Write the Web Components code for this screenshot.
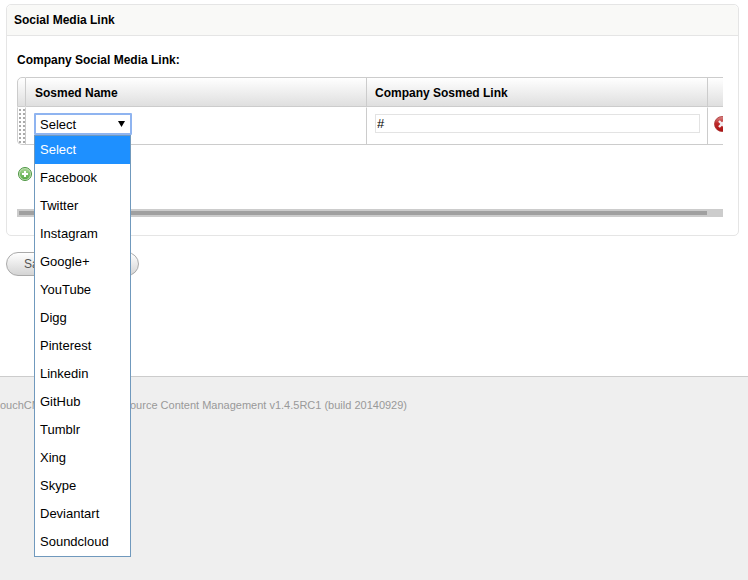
<!DOCTYPE html>
<html lang="en">
<head>
<meta charset="utf-8">
<title>Social Media Link</title>
<style>
  html {
    height: 100%;
  }

  body {
    min-height: 100%;
    margin: 0;
    display: flex;
    flex-direction: column;
    overflow-x: hidden;
    background: #fff;
    color: #000;
    font: 12px/16px "Liberation Sans", Arial, sans-serif;
  }

  main {
    box-sizing: border-box;
    min-height: 376px;
    padding: 4px 9px 0 6px;
  }
</style>
</head>
<body>
<main>
  <cms-panel heading="Social Media Link">
    <sosmed-table label="Company Social Media Link:"></sosmed-table>
  </cms-panel>
  <cms-button>Sa</cms-button>
</main>
<cms-footer>
  <span slot="product">ouchCM</span>
  ource Content Management v1.4.5RC1 (build 20140929)
</cms-footer>

<script>
class CmsPanel extends HTMLElement {
  constructor() {
    super();
    this.attachShadow({ mode: 'open' });

    this.shadowRoot.innerHTML = `
      <style>
        :host {
          display: block;
          border: 1px solid #e5e5e5;
          border-radius: 5px;
        }

        h2 {
          margin: 0;
          padding: 7px;
          border-bottom: 1px solid #e5e5e5;
          border-radius: 5px 5px 0 0;
          background: #f9f9f7;
          font-size: 12px;
          line-height: 16px;
        }

        .body {
          padding: 16px 15px 18px 10px;
        }
      </style>
      <h2></h2>
      <div class="body"><slot></slot></div>
    `;
  }

  connectedCallback() {
    this.shadowRoot.querySelector('h2').textContent = this.getAttribute('heading');
  }
}

class SosmedSelect extends HTMLElement {
  constructor() {
    super();
    this.attachShadow({ mode: 'open' });

    this.shadowRoot.innerHTML = `
      <style>
        :host {
          display: block;
          position: relative;
          width: 98px;
          font-size: 13px;
        }

        select {
          appearance: none;
          display: block;
          box-sizing: border-box;
          width: 100%;
          height: 22px;
          margin: 0;
          padding: 1px 4px 0;
          border: 2px solid #8fb4f0;
          border-radius: 1px;
          outline: none;
          background: #fff;
          color: #000;
          font: inherit;
        }

        svg {
          position: absolute;
          top: 8px;
          right: 7px;
          pointer-events: none;
        }

        ul {
          position: absolute;
          z-index: 10;
          top: 22px;
          left: 0;
          right: 1px;
          margin: 0;
          padding: 0;
          border: 1px solid #7099bd;
          background: #fff;
          list-style: none;
        }

        ul[hidden] {
          display: none;
        }

        li {
          padding: 0 5px;
          line-height: 28px;
          cursor: default;
        }

        li[aria-selected="true"] {
          background: #1e90ff;
          color: #fff;
        }
      </style>
      <select aria-label="Sosmed Name"></select>
      <svg width="7" height="6" viewBox="0 0 7 6" aria-hidden="true">
        <path d="M0 0h7L3.500 6z"/>
      </svg>
      <ul role="listbox" aria-label="Sosmed Name"></ul>
    `;

    this._select = this.shadowRoot.querySelector('select');
    this._list = this.shadowRoot.querySelector('ul');
  }

  set options(names) {
    this._select.replaceChildren(...names.map((name) => new Option(name)));
    this._list.replaceChildren(...names.map((name) => {
      const item = document.createElement('li');
      item.setAttribute('role', 'option');
      item.textContent = name;
      return item;
    }));
    this.mark();
  }

  mark() {
    [...this._list.children].forEach((item, i) => {
      item.setAttribute('aria-selected', String(i === this._select.selectedIndex));
    });
  }

  connectedCallback() {
    this._select.addEventListener('mousedown', (e) => {
      e.preventDefault();
      this._list.hidden = !this._list.hidden;
    });
    this._select.addEventListener('change', () => this.mark());
    this._list.addEventListener('click', (e) => {
      this._select.selectedIndex = [...this._list.children].indexOf(e.target);
      this.mark();
      this._list.hidden = true;
    });
  }
}

class SosmedTable extends HTMLElement {
  constructor() {
    super();
    this.attachShadow({ mode: 'open' });

    this.shadowRoot.innerHTML = `
      <style>
        :host {
          display: block;
        }

        h3 {
          margin: 0 0 9px;
          font-size: 12px;
          line-height: 16px;
        }

        /* cuts the sides only, the open list hangs out below */
        .scroller {
          position: relative;
          z-index: 5;
          clip-path: inset(0 0 -500px 0);
        }

        /* a little wider than the panel, so the last column is cut */
        table {
          width: calc(100% + 14px);
          table-layout: fixed;
          border-collapse: separate;
          border-spacing: 0;
        }

        th, td {
          box-sizing: border-box;
          border-right: 1px solid #ccc;
          border-bottom: 1px solid #ccc;
          text-align: left;
        }

        th {
          height: 30px;
          padding: 2px 8px 0 9px;
          border-top: 1px solid #ccc;
          background: linear-gradient(#fff, #dfdfdf);
        }

        th:nth-child(3) {
          padding-left: 8px;
        }

        td {
          height: 38px;
          padding: 0 7px 0 8px;
          border-top: 1px solid #fff;
          vertical-align: top;
        }

        th:first-child, td:first-child {
          padding: 0;
          border-left: 1px solid #ccc;
        }

        th:first-child {
          border-top-left-radius: 5px;
        }

        td:first-child {
          border-bottom-left-radius: 5px;
        }

        .handle {
          width: 9px;
        }

        .tools {
          width: 29px;
        }

        .grip {
          display: block;
          height: 36px;
          margin-left: 1px;
          background: conic-gradient(#aaa 25%, transparent 0) -2px 1px / 4px 4px;
          cursor: move;
        }

        sosmed-select {
          margin-top: 5px;
        }

        input {
          display: block;
          box-sizing: border-box;
          width: 100%;
          height: 19px;
          margin: 6px 0 0;
          padding: 0 1px;
          border: 1px solid #e3e3e3;
          background: #fff;
          color: #000;
          font: inherit;
          font-size: 13px;
        }

        button {
          display: block;
          padding: 0;
          border: 0;
          background: none;
          cursor: pointer;
        }

        .delete {
          margin: 8px 0 0 -2px;
        }

        .add {
          margin: 22px 0 28px 1px;
        }

        svg {
          display: block;
        }

        .bar {
          padding: 2px 16px 2px 2px;
          background: #ccc;
        }

        .thumb {
          height: 4px;
          background: #a0a0a0;
        }
      </style>
      <h3></h3>
      <div class="scroller">
        <table>
          <thead>
            <tr>
              <th class="handle"></th>
              <th>Sosmed Name</th>
              <th>Company Sosmed Link</th>
              <th class="tools"></th>
            </tr>
          </thead>
          <tbody>
            <tr>
              <td><span class="grip"></span></td>
              <td><sosmed-select></sosmed-select></td>
              <td><input type="text" value="#" aria-label="Company Sosmed Link"></td>
              <td>
                <button class="delete" type="button" aria-label="Delete row">
                  <svg width="16" height="16" viewBox="0 0 16 16">
                    <defs>
                      <linearGradient id="red" x1="0" y1="0" x2="0" y2="1">
                        <stop offset="0" stop-color="#d98a8a"/>
                        <stop offset=".45" stop-color="#bf2b2b"/>
                        <stop offset="1" stop-color="#a80f0f"/>
                      </linearGradient>
                    </defs>
                    <circle cx="8" cy="8" r="7.5" fill="url(#red)" stroke="#a33" stroke-width=".8"/>
                    <path d="M5 5l6 6M11 5l-6 6" stroke="#f4eef2" stroke-width="2.4"/>
                  </svg>
                </button>
              </td>
            </tr>
          </tbody>
        </table>
      </div>
      <button class="add" type="button" aria-label="Add row">
        <svg width="14" height="14" viewBox="0 0 14 14">
          <defs>
            <linearGradient id="green" x1="0" y1="0" x2="0" y2="1">
              <stop offset="0" stop-color="#a5d391"/>
              <stop offset="1" stop-color="#58aa46"/>
            </linearGradient>
          </defs>
          <circle cx="7" cy="7" r="6.5" fill="#c4e2b8" stroke="#4b9440"/>
          <circle cx="7" cy="7" r="5.2" fill="url(#green)"/>
          <path d="M7 4v6M4 7h6" stroke="#fff" stroke-width="2"/>
        </svg>
      </button>
      <div class="bar"><div class="thumb"></div></div>
    `;
  }

  connectedCallback() {
    this.shadowRoot.querySelector('h3').textContent = this.getAttribute('label');

    const list = this.shadowRoot.querySelector('sosmed-select');
    list.options = [
      'Select', 'Facebook', 'Twitter', 'Instagram', 'Google+',
      'YouTube', 'Digg', 'Pinterest', 'Linkedin', 'GitHub',
      'Tumblr', 'Xing', 'Skype', 'Deviantart', 'Soundcloud',
    ];
  }
}

class CmsButton extends HTMLElement {
  constructor() {
    super();
    this.attachShadow({ mode: 'open' });

    this.shadowRoot.innerHTML = `
      <style>
        :host {
          display: block;
          margin-top: 16px;
        }

        button {
          box-sizing: border-box;
          min-width: 133px;
          height: 24px;
          padding: 0 17px;
          border: 1px solid #aaa;
          border-radius: 12px;
          background: linear-gradient(#fff, #d4d4d4);
          color: #555;
          font: inherit;
          text-align: left;
          cursor: pointer;
        }
      </style>
      <button type="button"><slot></slot></button>
    `;
  }
}

class CmsFooter extends HTMLElement {
  constructor() {
    super();
    this.attachShadow({ mode: 'open' });

    this.shadowRoot.innerHTML = `
      <style>
        :host {
          display: grid;
          grid-template-columns: 130px 1fr;
          flex: 1;
          padding-top: 20px;
          border-top: 1px solid #ccc;
          background: #efefef;
          color: #999;
          font-size: 11px;
        }
      </style>
      <div><slot name="product"></slot></div>
      <div><slot></slot></div>
    `;
  }
}

window.customElements.define('cms-panel', CmsPanel);
window.customElements.define('sosmed-select', SosmedSelect);
window.customElements.define('sosmed-table', SosmedTable);
window.customElements.define('cms-button', CmsButton);
window.customElements.define('cms-footer', CmsFooter);
</script>
</body>
</html>
